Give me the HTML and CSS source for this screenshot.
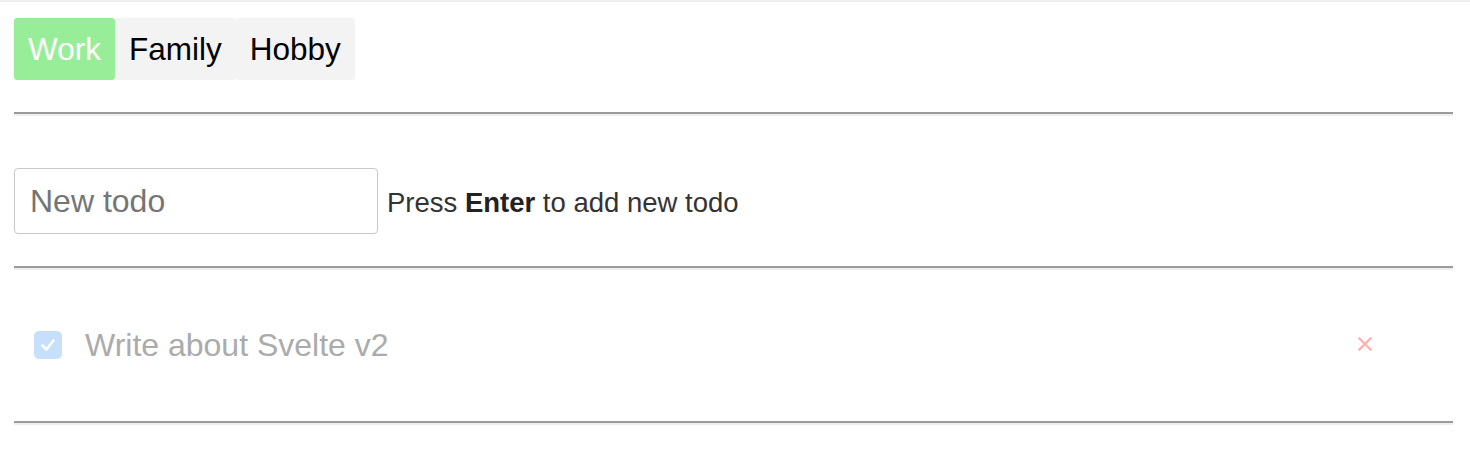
FILE: index.html
```html
<!DOCTYPE html>
<html>
<head>
<meta charset="utf-8">
<link rel="stylesheet" href="styles.css">
</head>
<body>
<div class="topstrip"></div>
<main class="app">
  <nav class="tabs">
    <button class="tab active">Work</button>
    <button class="tab">Family</button>
    <button class="tab">Hobby</button>
  </nav>
  <hr class="rule">
  <div class="new-row">
    <input class="new-input" type="text" placeholder="New todo">
    <span class="hint">Press <b>Enter</b> to add new todo</span>
  </div>
  <hr class="rule">
  <ul class="todos">
    <li class="todo done">
      <span class="check">
        <svg width="20" height="20" viewBox="0 0 20 20"><path d="M4.5 10.5 L8.5 14.5 L15.5 5.5" fill="none" stroke="#fff" stroke-width="2.6" stroke-linecap="round" stroke-linejoin="round"/></svg>
      </span>
      <span class="todo-text">Write about Svelte v2</span>
      <button class="remove" aria-label="remove">
        <svg width="14" height="14" viewBox="0 0 14 14"><path d="M1.5 1.5 L12.5 12.5 M12.5 1.5 L1.5 12.5" stroke="#ffb0b0" stroke-width="2.4" stroke-linecap="square"/></svg>
      </button>
    </li>
  </ul>
  <hr class="rule flush">
</main>
</body>
</html>
```

FILE: styles.css
```css
html, body {
  margin: 0;
  padding: 0;
  background: #fff;
}
body {
  font-family: "Liberation Sans", Arial, sans-serif;
  color: #333;
}
.topstrip {
  height: 2px;
  background: #eeeeee;
}
.app {
  padding: 16px 17px 0 14px;
}
.tabs {
  display: flex;
}
.tab {
  height: 62px;
  padding: 0 14px;
  border: none;
  border-radius: 3px;
  background: #f3f3f3;
  color: #000;
  font-family: "Liberation Sans", Arial, sans-serif;
  font-size: 31.5px;
  cursor: pointer;
}
.tab.active {
  background: #98ee98;
  color: #fff;
}
.rule {
  margin: 32px 0 0 0;
  border: none;
  border-top: 2px solid #9b9b9b;
  border-bottom: 2px solid #eeeeee;
  height: 0;
}
.rule.flush {
  margin-top: 0;
}
.new-row {
  display: flex;
  align-items: center;
  margin-top: 52px;
}
.new-input {
  box-sizing: border-box;
  width: 364px;
  height: 66px;
  padding: 0 15px;
  border: 1px solid #c8c8c8;
  border-radius: 4px;
  font-family: "Liberation Sans", Arial, sans-serif;
  font-size: 32px;
  color: #333;
  outline: none;
}
.new-input::placeholder {
  color: #757575;
}
.hint {
  margin-left: 9px;
  padding-top: 4px;
  font-size: 27.5px;
  color: #333;
}
.hint b {
  color: #222;
}
.todos {
  list-style: none;
  margin: 0;
  padding: 0;
}
.todo {
  display: flex;
  align-items: center;
  height: 151px;
  padding-left: 20px;
}
.check {
  display: flex;
  align-items: center;
  justify-content: center;
  width: 28px;
  height: 28px;
  margin-top: -2px;
  border-radius: 5px;
  background: #c6e0fc;
  flex: none;
}
.todo-text {
  flex: 1;
  margin-left: 23px;
  font-size: 32px;
  color: #ababab;
}
.remove {
  display: flex;
  align-items: center;
  justify-content: center;
  padding: 0;
  margin-right: 81px;
  margin-bottom: 4px;
  width: 14px;
  height: 14px;
  border: none;
  background: none;
  cursor: pointer;
}
```
